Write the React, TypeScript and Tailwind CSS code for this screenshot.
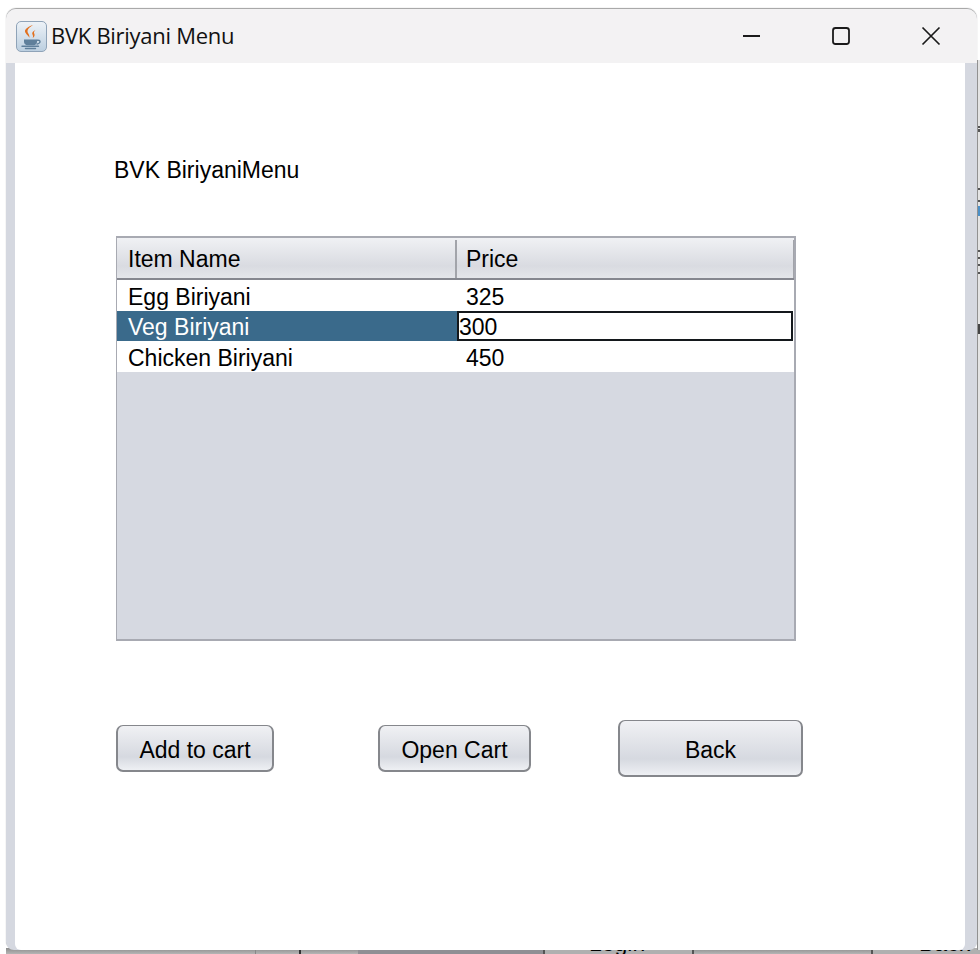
const rows = [
  { name: 'Egg Biriyani', price: '325' },
  { name: 'Veg Biriyani', price: '300', selected: true },
  { name: 'Chicken Biriyani', price: '450' },
]

// cut-off glyphs of the window behind, seen at the right edge
const edgeMarks = [
  { top: 126, color: '#555555', height: 6 },
  { top: 128, color: '#e4e4e4', height: 1 },
  { top: 188, color: '#555555', height: 2 },
  { top: 200, color: '#555555', height: 2 },
  { top: 206, color: '#4a90c8', height: 10 },
  { top: 250, color: '#555555', height: 2 },
  { top: 257, color: '#555555', height: 2 },
  { top: 264, color: '#555555', height: 2 },
  { top: 272, color: '#555555', height: 2 },
  { top: 324, color: '#444444', height: 10 },
]

function JavaIcon() {
  return (
    <div className="flex h-[31px] w-[31px] items-center justify-center rounded-[5px] border border-[#8fa3b8] bg-gradient-to-b from-[#edf2f7] to-[#bccfe0]">
      <svg width="27" height="27" viewBox="0 0 27 27" fill="none">
        <path d="M15 2c-4 2.500-6.500 5-5 8 .8 1.500 1.800 2.500 1.300 5-.1-2-3.800-4-4.300-6.500C6.600 6 10.500 3.500 15 2z" fill="#e2701f" />
        <path d="M17.500 7c-2.500 1.300-4 2.800-3 4.600.5 1 .8 2 .2 3.400 2-1.500 2.300-3 1.500-4.500-.6-1.100 0-2.300 1.300-3.500z" fill="#e2701f" />
        <path d="M6 16.500h13v2.500c0 2-1.700 3.200-3.500 3.200h-6C7.700 22.200 6 21 6 19z" fill="#5f7f9b" />
        <path d="M19 17.300c3.800-.8 4.300 3-.4 4" stroke="#5f7f9b" strokeWidth="1.400" />
        <path d="M4 23.300h16.500M7.500 25.500h10" stroke="#5f7f9b" strokeWidth="1.400" strokeLinecap="round" />
      </svg>
    </div>
  )
}

function WindowControls() {
  return (
    <div className="flex items-center text-[#1a1a1a]">
      <svg width="20" height="20" viewBox="0 0 20 20" className="mr-[69px]">
        <path d="M1 10h17" stroke="currentColor" strokeWidth="1.800" />
      </svg>
      <svg width="20" height="20" viewBox="0 0 20 20" className="mr-[70px]">
        <rect x="2" y="2" width="16" height="16" rx="2.500" fill="none" stroke="currentColor" strokeWidth="1.800" />
      </svg>
      <svg width="20" height="20" viewBox="0 0 20 20" className="mr-[36px]">
        <path d="M1.500 1.500l17 17M18.500 1.500l-17 17" stroke="currentColor" strokeWidth="1.700" />
      </svg>
    </div>
  )
}

function SwingButton({ label, className }: { label: string; className: string }) {
  return (
    <button
      type="button"
      className={`flex items-center justify-center rounded-[7px] border-2 border-t border-[#85878c] bg-gradient-to-b from-[#f0f1f4] via-[#d6d9e0] via-70% to-[#eef0f4] pt-[4px] text-[23px] leading-none text-black ${className}`}
    >
      {label}
    </button>
  )
}

function MenuTable() {
  return (
    <div className="flex h-[405px] w-[680px] flex-col border-2 border-l border-[#a8aab2] bg-[#d6d9e1]">
      <div className="flex h-[42px] border-b-2 border-[#85878f] bg-gradient-to-b from-[#f0f1f4] via-[#d9dbe1] via-70% to-[#e4e6ea] pt-[2px] text-[23px] text-black">
        <div className="flex w-[340px] items-center border-r-2 border-[#a2a4aa] pl-[11px]">Item Name</div>
        <div className="flex flex-1 items-center border-r border-[#a2a4aa] pl-[9px]">Price</div>
      </div>
      {rows.map((row) => (
        <div key={row.name} className="flex h-[30.500px] bg-white text-[23px] text-black">
          <div
            className={`flex w-[340px] items-center pl-[11px] ${row.selected ? 'bg-[#3a6a8b] pt-[2px] text-white' : 'pt-[4px]'}`}
          >
            {row.name}
          </div>
          {row.selected ? (
            <div className="mr-px flex flex-1 items-center border-2 border-[#14181c] pl-0 pt-[2px]">{row.price}</div>
          ) : (
            <div className="flex flex-1 items-center pl-[9px] pt-[4px]">{row.price}</div>
          )}
        </div>
      ))}
    </div>
  )
}

// the window behind: only a sliver shows under and right of the frame
function Backdrop() {
  return (
    <>
      <div className="absolute bottom-0 left-[6px] flex h-[6px] w-[974px] bg-gradient-to-b from-[#8c8c8c] to-[#b5b5b5] text-[23px] leading-none text-black">
        <div className="w-[249px]" />
        <div className="w-[44px] border-l border-[#888]" />
        <div className="w-[59px] border-l-2 border-[#333]" />
        <div className="w-[185px] bg-[#8f8f94]" />
        <div className="relative w-[149px] border-l-2 border-[#555] bg-[#b0b0b0]">
          <span className="absolute left-[44px] top-[-16px]">Login</span>
        </div>
        <div className="w-[179px] border-l-2 border-[#555]" />
        <div className="relative flex-1 border-l-2 border-[#555] bg-[#b0b0b0]">
          <span className="absolute left-[46px] top-[-16px]">Back</span>
        </div>
      </div>
      <div className="absolute right-0 top-[60px] h-[890px] w-[3px] border-l border-[#8f8f8f] bg-[#e4e4e4]">
        {edgeMarks.map((mark) => (
          <div
            key={mark.top}
            className="absolute left-0 w-full"
            style={{ top: mark.top - 60, height: mark.height, backgroundColor: mark.color }}
          />
        ))}
      </div>
    </>
  )
}

export default function App() {
  return (
    <div className="relative h-[954px] w-[980px] overflow-hidden bg-white font-['Liberation_Sans',Arial,sans-serif]">
      <Backdrop />
      <div className="absolute left-[6px] top-[9px] flex h-[941px] w-[971px] flex-col overflow-hidden rounded-t-[10px] rounded-b-[8px] bg-[#d5d8e0] shadow-[0_-1px_1px_#a0a0a0]">
        <div className="flex h-[54px] shrink-0 items-center justify-between bg-[#f3f2f3] pl-[10px]">
          <div className="flex items-center gap-[4px] pt-[1px]">
            <JavaIcon />
            <span className="pb-[4px] font-['Open_Sans',sans-serif] text-[22px] leading-none tracking-[-0.28px] text-[#111]">
              BVK Biriyani Menu
            </span>
          </div>
          <WindowControls />
        </div>
        <div className="ml-[9px] mr-[12px] flex-1 rounded-b-[6px] bg-white pl-[101px]">
          <p className="mt-[94px] ml-[-2px] text-[23px] leading-[26px] text-black">BVK BiriyaniMenu</p>
          <div className="mt-[53px]">
            <MenuTable />
          </div>
          <div className="mt-[79px] flex h-[57px] items-center">
            <SwingButton label="Add to cart" className="h-[47px] w-[158px]" />
            <SwingButton label="Open Cart" className="ml-[104px] h-[47px] w-[153px]" />
            <SwingButton label="Back" className="ml-[87px] h-[57px] w-[185px]" />
          </div>
        </div>
      </div>
    </div>
  )
}
